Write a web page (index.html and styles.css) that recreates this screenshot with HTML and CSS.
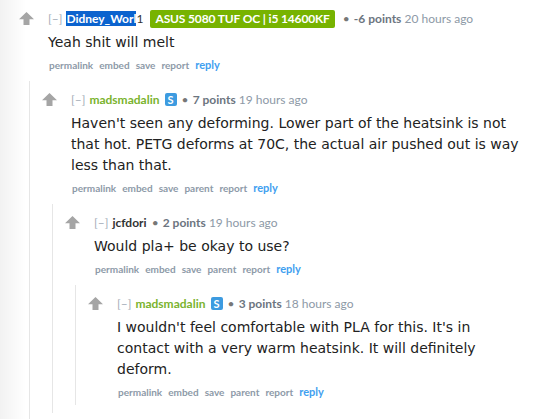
FILE: index.html
```html
<!DOCTYPE html>
<html lang="en">
<head>
    <meta charset="UTF-8">
    <title>Comments</title>
    <link rel="stylesheet" href="styles.css">
</head>
<body>

    <div class="thread">

        <!-- top level comment -->
        <div class="comment top">
            <div class="row">
                <div class="midcol"><span class="arrow"></span></div>
                <div class="entry">
                    <p class="tagline">
                        <span class="expand">[&ndash;]</span>
                        <span class="author selected">Didney_Worl</span><span class="author-tail">1</span>
                        <span class="flair">ASUS 5080 TUF OC | i5 14600KF</span>
                        <span class="dot">&bull;</span>
                        <span class="score">-6 points</span>
                        <span class="time">20 hours ago</span>
                    </p>
                    <div class="md">Yeah shit will melt</div>
                    <ul class="buttons">
                        <li>permalink</li>
                        <li>embed</li>
                        <li>save</li>
                        <li>report</li>
                        <li class="reply">reply</li>
                    </ul>
                </div>
            </div>

            <div class="child">
                <div class="comment">
                    <div class="row">
                        <div class="midcol"><span class="arrow"></span></div>
                        <div class="entry">
                            <p class="tagline">
                                <span class="expand">[&ndash;]</span>
                                <span class="author op">madsmadalin</span>
                                <span class="submitter">S</span>
                                <span class="dot">&bull;</span>
                                <span class="score">7 points</span>
                                <span class="time">19 hours ago</span>
                            </p>
                            <div class="md">Haven't seen any deforming. Lower part of the heatsink is not that hot. PETG deforms at 70C, the actual air pushed out is way less than that.</div>
                            <ul class="buttons">
                                <li>permalink</li>
                                <li>embed</li>
                                <li>save</li>
                                <li>parent</li>
                                <li>report</li>
                                <li class="reply">reply</li>
                            </ul>
                        </div>
                    </div>

                    <div class="child">
                        <div class="comment">
                            <div class="row">
                                <div class="midcol"><span class="arrow"></span></div>
                                <div class="entry">
                                    <p class="tagline">
                                        <span class="expand">[&ndash;]</span>
                                        <span class="author">jcfdori</span>
                                        <span class="dot">&bull;</span>
                                        <span class="score">2 points</span>
                                        <span class="time">19 hours ago</span>
                                    </p>
                                    <div class="md">Would pla+ be okay to use?</div>
                                    <ul class="buttons">
                                        <li>permalink</li>
                                        <li>embed</li>
                                        <li>save</li>
                                        <li>parent</li>
                                        <li>report</li>
                                        <li class="reply">reply</li>
                                    </ul>
                                </div>
                            </div>

                            <div class="child">
                                <div class="comment">
                                    <div class="row">
                                        <div class="midcol"><span class="arrow"></span></div>
                                        <div class="entry">
                                            <p class="tagline">
                                                <span class="expand">[&ndash;]</span>
                                                <span class="author op">madsmadalin</span>
                                                <span class="submitter">S</span>
                                                <span class="dot">&bull;</span>
                                                <span class="score">3 points</span>
                                                <span class="time">18 hours ago</span>
                                            </p>
                                            <div class="md">I wouldn't feel comfortable with PLA for this. It's in contact with a very warm heatsink. It will definitely deform.</div>
                                            <ul class="buttons">
                                                <li>permalink</li>
                                                <li>embed</li>
                                                <li>save</li>
                                                <li>parent</li>
                                                <li>report</li>
                                                <li class="reply">reply</li>
                                            </ul>
                                        </div>
                                    </div>
                                </div>
                            </div>
                        </div>
                    </div>
                </div>
            </div>
        </div>

    </div>

</body>
</html>
```

FILE: styles.css
```css
body {
    margin: 0;
    background: linear-gradient(to right, #f2f2f2, #fff 26px);
    font-family: Lato, "Open Sans", sans-serif;
    color: #222;
    min-height: 419px;
}

.thread {
    padding: 0 9px 0 6px;
}

.comment {
    padding-top: 9px;
    border-left: 1px solid #e6e6e6;
}

.comment.top {
    border-left-color: transparent;
}

.row {
    display: flex;
}

/* vote arrow column */
.midcol {
    width: 41px;
    padding-left: 12px;
    box-sizing: border-box;
    flex-shrink: 0;
}

.arrow {
    display: block;
    width: 15px;
    height: 13px;
    margin-top: 3px;
    background: #a5a5a5;
    clip-path: polygon(50% 0, 100% 55%, 70% 55%, 70% 100%, 30% 100%, 30% 55%, 0 55%);
}

.entry {
    flex: 1;
    min-width: 0;
}

.tagline {
    margin: 0;
    font-size: 12px;
    line-height: 20px;
    color: #8d99a6;
}

.expand {
    color: #a4adb8;
    margin-right: 1px;
}

.author {
    font-weight: bold;
    color: #333;
}

.author.op {
    color: #7ab32e;
}

.selected {
    background: #0b63ce;
    color: #fff;
}

.author-tail {
    color: #333;
    margin-right: 4px;
}

.flair {
    display: inline-block;
    background: #77b300;
    color: #fff;
    font-weight: bold;
    font-size: 12px;
    line-height: 18px;
    padding: 0 5px;
    border-radius: 2px;
    margin-right: 3px;
    letter-spacing: -0.15px;
}

.submitter {
    display: inline-block;
    background: #3d9be0;
    color: #fff;
    font-weight: bold;
    font-size: 11px;
    line-height: 13px;
    width: 12px;
    text-align: center;
    border-radius: 2px;
    margin-left: 2px;
}

.dot {
    color: #777;
    margin: 0 1px 0 2px;
}

.score {
    font-weight: bold;
    color: #6c7580;
}

.md {
    margin-top: 3px;
    font-family: "DejaVu Sans", Verdana, sans-serif;
    font-size: 14px;
    line-height: 21px;
    color: #222;
}

.buttons {
    list-style: none;
    margin: 0;
    padding: 4px 0 5px 1px;
    display: flex;
    gap: 6px;
    font-size: 10px;
    font-weight: bold;
    line-height: 16px;
    color: #8d9aa8;
}

.buttons .reply {
    color: #3fa0f0;
    font-size: 11px;
}

.child {
    margin-top: 3px;
    margin-left: 22px;
    padding-bottom: 8px;
}
```
